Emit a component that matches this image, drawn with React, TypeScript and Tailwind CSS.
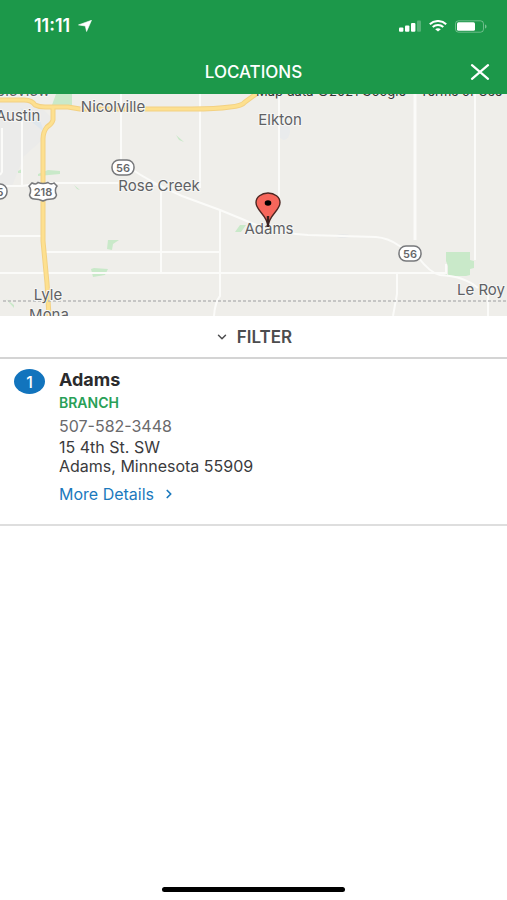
import { ChevronDown, ChevronRight } from "lucide-react";

const locations = [
  {
    id: 1,
    name: "Adams",
    type: "BRANCH",
    phone: "507-582-3448",
    street: "15 4th St. SW",
    city: "Adams, Minnesota 55909",
  },
];

const towns = [
  { name: "Nicolville", x: 113, y: 18 },
  { name: "Austin", x: 18, y: 27 },
  { name: "Elkton", x: 280, y: 31 },
  { name: "Rose Creek", x: 159, y: 97 },
  { name: "Adams", x: 269, y: 140 },
  { name: "Lyle", x: 48, y: 206 },
  { name: "Mona", x: 49, y: 226 },
  { name: "Le Roy", x: 481, y: 201 },
  { name: "Mapleview", x: 12, y: 2 },
];

const highways =
  "M0 6h24q8 0 11 5 4 2 10 2h23l12 2h112q24 0 38-2 12-1 15-5l11-8M53 13v13q-1 4-6 7-4 5-4 12v102l4 42 2 33";

const StatusBar = () => (
  <div className="flex h-[50px] items-center justify-between pl-[34px] pr-5 pt-[2px]">
    <div className="flex items-center gap-2">
      <span className="text-lg leading-5 font-semibold">11:11</span>
      <svg width="14" height="12" viewBox="0 0 14 12" fill="currentColor" aria-hidden="true">
        <path d="M13.5.3 8.6 11.5 7.3 6 .5 4.9Z" stroke="currentColor" strokeWidth=".6" strokeLinejoin="round" />
      </svg>
    </div>
    <div className="flex items-center gap-2">
      <svg width="22" height="12" viewBox="0 0 22 12" fill="currentColor" aria-hidden="true">
        <rect x="0" y="7.5" width="4.4" height="4.2" rx="1" />
        <rect x="6" y="5.5" width="4.4" height="6.2" rx="1" />
        <rect x="12" y="3" width="4.4" height="8.7" rx="1" />
        <rect x="18" y="0.5" width="4" height="11.2" rx="1" opacity=".25" />
      </svg>
      <svg width="18" height="12" viewBox="0 0 18 12" fill="none" stroke="currentColor" strokeWidth="2" aria-hidden="true">
        <path d="M.8 4.2C5.3-.1 12.7-.1 17.2 4.2M3.7 6.9c3-2.7 7.6-2.7 10.6 0" />
        <path d="M9 11.5 6.2 9.2c1.6-1.3 4-1.3 5.6 0Z" fill="currentColor" stroke="none" />
      </svg>
      <svg width="32" height="13" viewBox="0 0 32 13" fill="none" aria-hidden="true">
        <rect x=".5" y=".8" width="28" height="11.4" rx="3" stroke="currentColor" opacity=".35" />
        <rect x="2" y="2.3" width="18" height="8.4" rx="1.5" fill="currentColor" />
        <path d="M30 4.500c2 .6 2 3.400 0 4Z" fill="currentColor" opacity=".4" />
      </svg>
    </div>
  </div>
);

const Header = () => (
  <header className="bg-[#1c984a] text-white">
    <StatusBar />
    <div className="grid h-11 grid-cols-[1fr_auto_1fr] items-center px-4">
      <h1 className="col-start-2 text-[17px] leading-5 font-medium">LOCATIONS</h1>
      <button type="button" aria-label="Close" className="justify-self-end">
        <svg width="22" height="16" viewBox="0 0 22 16" fill="none" stroke="currentColor" strokeWidth="2.2" strokeLinecap="round">
          <path d="M3 1.200 19 14.800M19 1.200 3 14.800" />
        </svg>
      </button>
    </div>
  </header>
);

const LocationMap = () => (
  <svg
    className="block h-[222px] w-full bg-[#efeeea]"
    viewBox="0 0 507 222"
    preserveAspectRatio="xMidYMid slice"
    role="img"
    aria-label="Map"
  >
    {/* Town area */}
    <path d="M0 8h36l16 16-10 22-18 16-12 30H0Z" fill="#ebebea" />
    <path d="M20 14l18 6 6 18-12-10Z" fill="#dfe7ed" />

    {/* Parks */}
    <g fill="#c9e9c9">
      <path d="M56 0h16v14l-20-3Z" />
      <path d="M38 80l10-4 12 1v3l-22 2ZM18 77l4-2v4h-4Z" />
      <path d="M108 146h11l-6 4-1 6-5-1ZM91 175l3-1 14 1-3 6-12 2Z" />
      <path d="M235 138l5-7h6l-5 7ZM6 205l8 6v3Z" />
      <path d="M446 158h24v8l4 1v7l-4 1v6l-4 1h-18v-10l-2-5ZM442 179h5v2Z" />
      <path d="M176 41l8 7-5-2ZM74 91l6 5-3-1Z" />
    </g>
    <ellipse cx="343" cy="142" rx="7" ry="2" fill="#e8e9e9" />
    <ellipse cx="284" cy="37" rx="6" ry="9" fill="#e9ebec" />

    {/* Minor roads */}
    <g fill="none" stroke="#fbfbf9" strokeWidth="2">
      <path d="M121 0v66M200 0v94M279 0v112M475 0v166" />
      <path d="M22 18v74M2 34v44l-2 3M0 92h22l20-3h110l9 3v86" />
      <path d="M0 142h42M44 158h176M0 179h446v-9" />
      <path d="M130 74q20 14 52 28l38 14 22 9q30 14 66 16l68 2q12 1 22 8l20 12q12 16 22 18 24 1 38 13" />
      <path d="M220 116v86q-5 6-6 20M397 180v20l-4 22M488 198v24" />
    </g>
    <path d="M415 0v146" fill="none" stroke="#fbfbf9" strokeWidth="3" />

    {/* Highways */}
    <g fill="none" strokeLinejoin="round">
      <path d={highways} stroke="#f3d182" strokeWidth="5" />
      <path d={highways} stroke="#fde08f" strokeWidth="3" />
    </g>
    <path d="M3 207H507" stroke="#b9b9b9" strokeWidth="1.3" strokeDasharray="3 2" />

    {/* Route shields */}
    <g fill="#fff" stroke="#77787b" strokeWidth="1.5">
      <rect x="112" y="66" width="22" height="15" rx="7" />
      <rect x="399" y="152" width="22" height="15" rx="7" />
      <rect x="-13" y="90" width="20" height="15" rx="7" />
      <path d="M32 89q4 2 6-.5 5 2 10 0 3 2.500 6 .5l3 3q-3 4-.5 9-1 4-5 4-5 0-8.500 2-4-2-8.500-2-4 0-5-4 2.500-5-.5-9Z" />
    </g>
    <g className="font-['Inter',sans-serif] text-[11px] font-semibold" fill="#66676a" textAnchor="middle">
      <text x="123" y="78">56</text>
      <text x="410" y="164">56</text>
      <text x="0" y="102">5</text>
      <text x="43" y="102">218</text>
    </g>

    {/* Labels */}
    <g
      className="font-['Inter',sans-serif] text-[15px]"
      fill="#5f6164"
      stroke="#f6f6f4"
      strokeWidth="2"
      strokeLinejoin="round"
      paintOrder="stroke"
      textAnchor="middle"
    >
      {towns.map((town) => (
        <text key={town.name} x={town.x} y={town.y}>
          {town.name}
        </text>
      ))}
    </g>
    <g className="font-['Inter',sans-serif] text-[13px]" fill="#333">
      <text x="256" y="2">Map data ©2021 Google</text>
      <text x="420" y="2">Terms of Use</text>
    </g>

    {/* Pin */}
    <path
      d="M268 132.500C267.400 121 256 117 256 108.500a12 9.500 0 0 1 24 0C280 117 268.600 121 268 132.500Z"
      fill="#f7665b"
      stroke="#4d2723"
      strokeWidth="1.4"
    />
    <path d="M268 122v11" stroke="#3b211f" strokeWidth="2.4" />
    <ellipse cx="268" cy="109" rx="3.3" ry="2.8" />
  </svg>
);

export default function App() {
  return (
    <div className="flex min-h-screen flex-col bg-white font-['Inter',sans-serif] text-[#3b3b3d]">
      <Header />
      <main className="flex-1">
        <LocationMap />
        <button
          type="button"
          className="flex h-[43px] w-full items-center justify-center gap-2 border-b-2 border-[#d4d4d4] text-[17px] leading-5 font-semibold text-[#4c4c4e]"
        >
          <ChevronDown size={14} strokeWidth={2.5} />
          FILTER
        </button>
        <ul>
          {locations.map((location) => (
            <li key={location.id} className="flex gap-[14px] border-b-2 border-[#dedede] px-[14px] pt-[9px] pb-5">
              <span className="mt-px flex h-[25px] w-[31px] shrink-0 items-center justify-center rounded-[50%] bg-[#1274bd] text-base font-medium text-white">
                {location.id}
              </span>
              <div>
                <h2 className="text-lg leading-6 font-bold text-[#2b2b2d]">{location.name}</h2>
                <p className="text-sm leading-[22px] font-semibold text-[#28a057]">{location.type}</p>
                <p className="text-base leading-6 text-[#6a6a6c]">{location.phone}</p>
                <address className="text-base leading-[19px] not-italic">
                  {location.street}
                  <br />
                  {location.city}
                </address>
                <a href="#details" className="mt-2 flex items-center gap-2 text-base leading-5 text-[#1b79bd]">
                  More Details
                  <ChevronRight size={14} strokeWidth={3} />
                </a>
              </div>
            </li>
          ))}
        </ul>
      </main>
      <div className="mx-auto mb-2 h-[5px] w-[36%] rounded-full bg-black" />
    </div>
  );
}
